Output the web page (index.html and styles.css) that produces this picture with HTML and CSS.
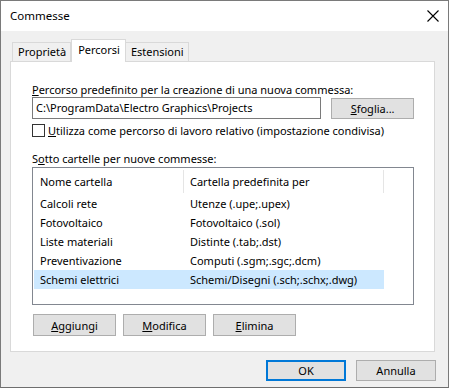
FILE: index.html
```html
<!DOCTYPE html>
<html lang="it">
<head>
    <meta charset="UTF-8">
    <title>Commesse</title>
    <link rel="stylesheet" href="styles.css">
</head>
<body>
    <div class="window">
        <div class="titlebar">
            <span class="title">Commesse</span>
            <svg class="close" width="12" height="12" viewBox="0 0 12 12">
                <path d="M0.5 0.5 L11.5 11.5 M11.5 0.5 L0.5 11.5" stroke="#000" stroke-width="1.1" fill="none"/>
            </svg>
        </div>
        <div class="content">
            <div class="tabs">
                <div class="tab">Proprietà</div>
                <div class="tab active">Percorsi</div>
                <div class="tab">Estensioni</div>
            </div>
            <div class="panel">
                <div class="label"><u>P</u>ercorso predefinito per la creazione di una nuova commessa:</div>
                <div class="path-row">
                    <div class="textbox">C:\ProgramData\Electro Graphics\Projects</div>
                    <button class="btn browse"><u>S</u>foglia...</button>
                </div>
                <label class="check-row">
                    <span class="checkbox"></span>
                    <span><u>U</u>tilizza come percorso di lavoro relativo (impostazione condivisa)</span>
                </label>
                <div class="label sub-label">S<u>o</u>tto cartelle per nuove commesse:</div>
                <div class="listview">
                    <div class="list-header">
                        <div class="col col-name">Nome cartella</div>
                        <div class="col col-type">Cartella predefinita per</div>
                    </div>
                    <div class="list-row">
                        <div class="col col-name">Calcoli rete</div>
                        <div class="col col-type">Utenze (.upe;.upex)</div>
                    </div>
                    <div class="list-row">
                        <div class="col col-name">Fotovoltaico</div>
                        <div class="col col-type">Fotovoltaico (.sol)</div>
                    </div>
                    <div class="list-row">
                        <div class="col col-name">Liste materiali</div>
                        <div class="col col-type">Distinte (.tab;.dst)</div>
                    </div>
                    <div class="list-row">
                        <div class="col col-name">Preventivazione</div>
                        <div class="col col-type">Computi (.sgm;.sgc;.dcm)</div>
                    </div>
                    <div class="list-row selected">
                        <div class="col col-name">Schemi elettrici</div>
                        <div class="col col-type">Schemi/Disegni (.sch;.schx;.dwg)</div>
                    </div>
                </div>
                <div class="list-buttons">
                    <button class="btn"><u>A</u>ggiungi</button>
                    <button class="btn"><u>M</u>odifica</button>
                    <button class="btn"><u>E</u>limina</button>
                </div>
            </div>
        </div>
        <div class="footer">
            <button class="btn dialog-btn default">OK</button>
            <button class="btn dialog-btn">Annulla</button>
        </div>
    </div>
</body>
</html>
```

FILE: styles.css
```css
body {
    margin: 0;
    font-family: "Noto Sans", "Open Sans", sans-serif;
    font-size: 11px;
    color: #000;
    background: #fff;
}
.window {
    width: 449px;
    height: 388px;
    box-sizing: border-box;
    border: 1px solid #7a7a7a;
    border-bottom-color: #6e6e6e;
    background-color: #f0f0f0;
    display: flex;
    flex-direction: column;
}
.titlebar {
    height: 30px;
    background-color: #fff;
    display: flex;
    align-items: center;
    justify-content: space-between;
    padding: 0 9px 0 9px;
}
.title {
    font-size: 11.5px;
    line-height: 16px;
    padding-bottom: 1px;
}
.close {
    display: block;
}
.content {
    padding: 8px 13px 0 9px;
}
.tabs {
    display: flex;
    align-items: flex-end;
    margin-left: 2px;
    height: 22px;
}
.tab {
    height: 19px;
    box-sizing: border-box;
    border: 1px solid #d9d9d9;
    border-bottom: none;
    padding: 1px 4px 0 5px;
    line-height: 16px;
    background-color: #f0f0f0;
}
.tab + .tab {
    border-left: none;
}
.tab.active {
    height: 23px;
    margin-bottom: -1px;
    background-color: #fff;
    border-left: 1px solid #d9d9d9;
    padding: 2px 5px 0 6px;
    position: relative;
    z-index: 1;
}
.tab.active + .tab {
    border-left: none;
}
.panel {
    height: 291px;
    box-sizing: border-box;
    border: 1px solid #d9d9d9;
    background-color: #fff;
    padding: 20px 20px 0 21px;
}
.label {
    line-height: 15px;
}
.path-row {
    display: flex;
    align-items: flex-start;
    gap: 10px;
}
.textbox {
    width: 290px;
    height: 22px;
    box-sizing: border-box;
    border: 1px solid #7a7a7a;
    padding: 0 3px;
    line-height: 20px;
}
.btn {
    font-family: inherit;
    font-size: 11px;
    color: #000;
    background-color: #e1e1e1;
    border: 1px solid #adadad;
    height: 22px;
    width: 83px;
    padding: 0;
    margin: 0;
}
.browse {
    height: 21px;
    margin-top: 1px;
}
.check-row {
    display: flex;
    align-items: center;
    gap: 3px;
    margin-top: 5px;
    line-height: 13px;
}
.checkbox {
    width: 13px;
    height: 13px;
    box-sizing: border-box;
    border: 1px solid #333;
    background-color: #fff;
}
.sub-label {
    margin-top: 14px;
}
.listview {
    height: 138px;
    box-sizing: border-box;
    border: 1px solid #828790;
    margin-top: 1px;
    padding: 0 0 0 1px;
}
.list-header {
    display: flex;
    height: 26px;
    box-sizing: border-box;
    padding: 2px 0 1px 0;
}
.list-header .col {
    border-right: 1px solid #e5e5e5;
    line-height: 23px;
}
.list-row {
    display: flex;
    height: 19px;
    line-height: 19px;
}
.col {
    padding-left: 6px;
    box-sizing: border-box;
    white-space: nowrap;
}
.col-name {
    width: 150px;
}
.col-type {
    width: 200px;
}
.list-row.selected {
    width: 350px;
    background-color: #cce8ff;
}
.list-buttons {
    display: flex;
    gap: 7px;
    margin-top: 9px;
    padding-left: 1px;
}
.footer {
    display: flex;
    justify-content: flex-end;
    gap: 10px;
    padding: 8px 12px 0 0;
}
.dialog-btn {
    width: 80px;
    height: 21px;
}
.dialog-btn.default {
    border: 2px solid #0078d7;
}
```
